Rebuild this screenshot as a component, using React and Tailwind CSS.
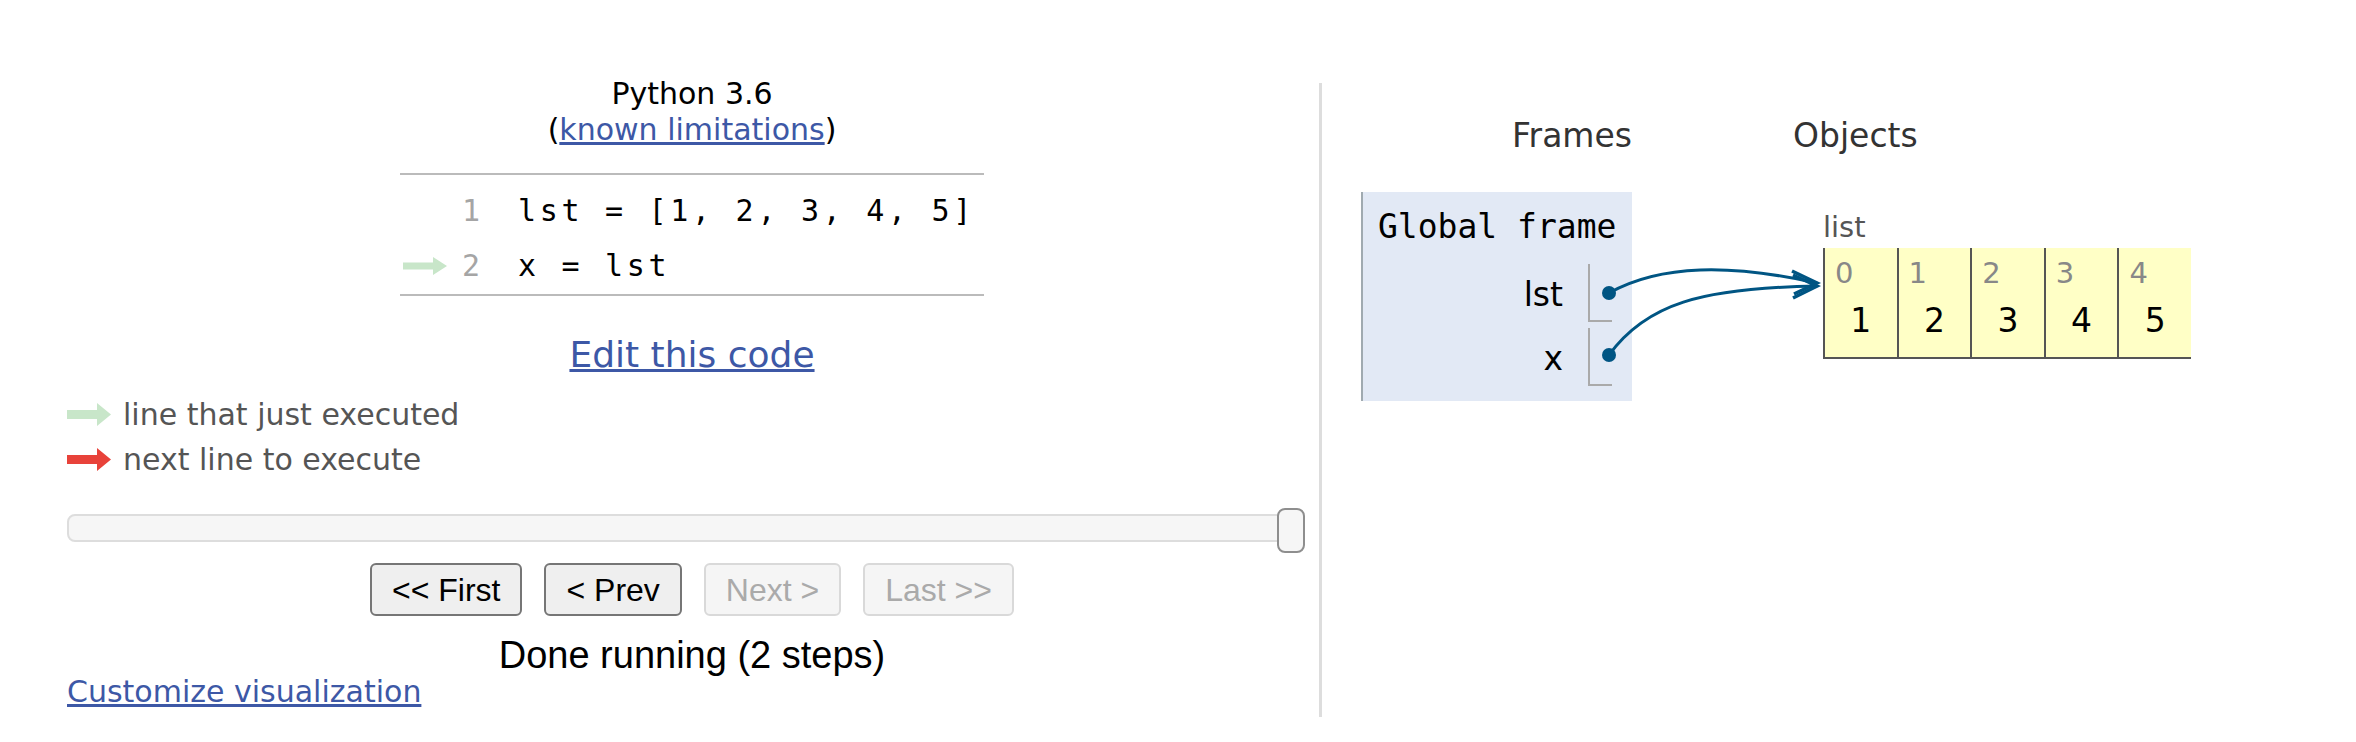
import React from "react";

const codeLines = [
  { n: 1, text: "lst = [1, 2, 3, 4, 5]", current: false },
  { n: 2, text: "x = lst", current: true },
];

const buttons = [
  { label: "<< First", enabled: true },
  { label: "< Prev", enabled: true },
  { label: "Next >", enabled: false },
  { label: "Last >>", enabled: false },
];

const listItems = [1, 2, 3, 4, 5];

const variables = ["lst", "x"];

// small block arrow used in the code gutter and legend
const BlockArrow = ({ color, h = 18 }) => {
  const s = h * 0.3;
  return (
    <svg width="44" height={h} viewBox={`0 0 44 ${h}`}>
      <polygon
        points={`0,${s} 30,${s} 30,0 44,${h / 2} 30,${h} 30,${h - s} 0,${h - s}`}
        fill={color}
      />
    </svg>
  );
};

const PointerArrows = () => (
  <svg
    className="absolute left-0 top-0 pointer-events-none"
    width="480"
    height="220"
    viewBox="0 0 480 220"
  >
    <path d="M 248 101 C 300 72, 370 72, 456 91" fill="none" stroke="#005583" strokeWidth="3" />
    <path d="M 248 163 C 285 112, 340 96, 456 94" fill="none" stroke="#005583" strokeWidth="3" />
    <polyline points="431,79 456,91 433,102" fill="none" stroke="#005583" strokeWidth="3.5" />
    <polyline points="432,83 456,94 432,106" fill="none" stroke="#005583" strokeWidth="3.5" />
    <circle cx="248" cy="101" r="7" fill="#005583" />
    <circle cx="248" cy="163" r="7" fill="#005583" />
  </svg>
);

export default function App() {
  return (
    <div className="w-[2356px] h-[742px] bg-white flex overflow-hidden">
      {/* left: code + controls */}
      <div className="ml-[67px] w-[1250px] flex flex-col font-['DejaVu_Sans',Verdana,sans-serif] text-[30px]">
        <div className="mt-[76px] flex flex-col items-center leading-[36px] text-black">
          <div>Python 3.6</div>
          <div>
            (<a href="#" className="text-[#3d58a6] underline">known limitations</a>)
          </div>
        </div>

        <div className="mt-[25px] self-center w-[584px] border-t-2 border-b-2 border-[#bbb] pt-[8px] pb-[1px] font-['DejaVu_Sans_Mono',monospace]">
          {codeLines.map((line) => (
            <div key={line.n} className="flex items-center h-[55px]">
              <div className="w-[50px] pl-[3px] flex items-center">
                {line.current && <BlockArrow color="#c8e6c9" h={18} />}
              </div>
              <div className="w-[30px] text-right text-[#a5a5a5]">{line.n}</div>
              <div className="ml-[38px] whitespace-pre tracking-[3.7px] text-black">{line.text}</div>
            </div>
          ))}
        </div>

        <a href="#" className="mt-[38px] self-center text-[36px] leading-[42px] text-[#3d58a6] underline">
          Edit this code
        </a>

        <div className="mt-[16px] flex flex-col text-[#555]">
          <div className="flex items-center h-[45px]">
            <BlockArrow color="#c8e6c9" h={23} />
            <span className="ml-[12px]">line that just executed</span>
          </div>
          <div className="flex items-center h-[45px]">
            <BlockArrow color="#e8423a" h={23} />
            <span className="ml-[12px]">next line to execute</span>
          </div>
        </div>

        <div className="mt-[26px] relative w-[1238px] h-[45px]">
          <div className="mt-[6px] h-[28px] rounded-[8px] border-2 border-[#ddd] bg-[#f6f6f6]" />
          <div className="absolute right-0 top-0 w-[28px] h-[45px] rounded-[8px] border-2 border-[#8e8e8e] bg-[#f6f6f6]" />
        </div>

        <div className="mt-[10px] self-center flex gap-[22px] font-['Liberation_Sans',Arial,sans-serif]">
          {buttons.map((b) => (
            <button
              key={b.label}
              disabled={!b.enabled}
              className={
                b.enabled
                  ? "h-[53px] px-[20px] border-2 border-[#767676] rounded-[6px] bg-[#efefef] text-black text-[32px] leading-none"
                  : "h-[53px] px-[20px] border-2 border-[#d9d9d9] rounded-[6px] bg-[#f5f5f5] text-[#aaa] text-[32px] leading-none"
              }
            >
              {b.label}
            </button>
          ))}
        </div>

        <div className="mt-[20px] self-center font-['Liberation_Sans',Arial,sans-serif] text-[38px] leading-[38px] text-black">
          Done running (2 steps)
        </div>

        <a href="#" className="self-start leading-[35px] text-[#3d58a6] underline">
          Customize visualization
        </a>
      </div>

      {/* right: frames and objects */}
      <div className="ml-[2px] mt-[83px] h-[634px] border-l-[3px] border-[#ddd] pl-[39px] font-['DejaVu_Sans',Verdana,sans-serif]">
        <div className="mt-[33px] flex text-[33px] leading-[40px] text-[#333]">
          <div className="w-[271px] text-right">Frames</div>
          <div className="ml-[161px]">Objects</div>
        </div>

        <div className="relative mt-[36px] flex items-start">
          <div className="w-[271px] h-[209px] bg-[#e2e9f5] border-l-2 border-[#a0aab0] pl-[15px] pt-[15px]">
            <div className="font-['DejaVu_Sans_Mono',monospace] text-[33px] leading-[40px] text-black">
              Global frame
            </div>
            <div className="mt-[17px] flex flex-col gap-[6px]">
              {variables.map((v) => (
                <div key={v} className="flex items-start justify-end pr-[20px] h-[58px]">
                  <div className="mt-[12px] mr-[25px] text-[33px] leading-[38px] text-black">{v}</div>
                  <div className="w-[24px] h-[58px] border-l-2 border-b-2 border-[#aaa]" />
                </div>
              ))}
            </div>
          </div>

          <div className="ml-[191px] flex flex-col">
            <div className="mt-[16px] text-[29px] leading-[38px] text-[#555]">list</div>
            <div className="mt-[2px] flex border-b-2 border-[#555] bg-[#ffffc6]">
              {listItems.map((val, i) => (
                <div key={i} className="w-[73.6px] h-[109px] border-l-2 border-[#555] flex flex-col">
                  <div className="pl-[10px] pt-[9px] text-[29px] leading-[32px] text-[#888]">{i}</div>
                  <div className="mt-[13px] text-center text-[33px] leading-[38px] text-black">{val}</div>
                </div>
              ))}
            </div>
          </div>

          <PointerArrows />
        </div>
      </div>
    </div>
  );
}
